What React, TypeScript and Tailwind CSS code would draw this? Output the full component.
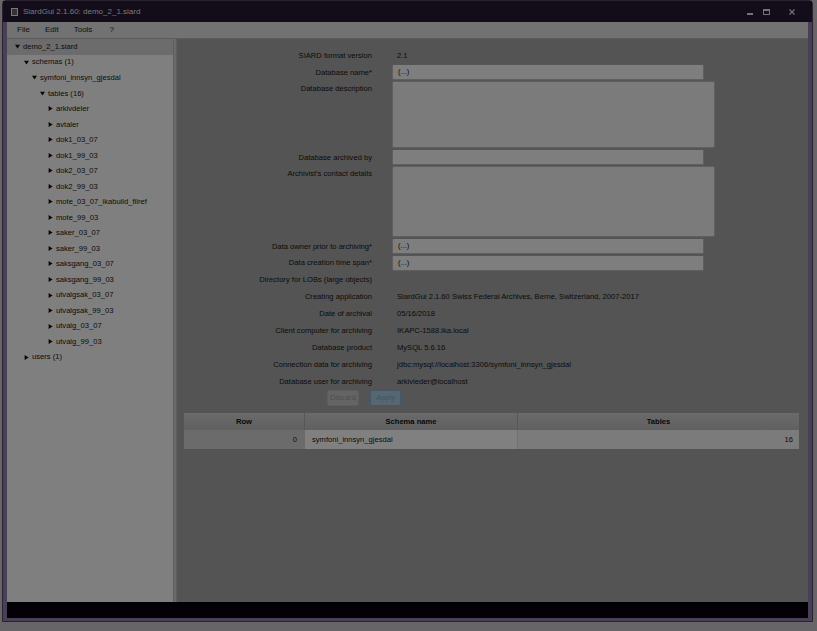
import React from 'react';

// SiardGui main window: tree of the archive on the left, metadata form and
// schema table on the right. The whole screenshot is dimmed, so colours are dark.

const font = { fontFamily: '"Liberation Sans", Arial, sans-serif' };

const tables = [
  'arkivdeler',
  'avtaler',
  'dok1_03_07',
  'dok1_99_03',
  'dok2_03_07',
  'dok2_99_03',
  'mote_03_07_ikabuild_filref',
  'mote_99_03',
  'saker_03_07',
  'saker_99_03',
  'saksgang_03_07',
  'saksgang_99_03',
  'utvalgsak_03_07',
  'utvalgsak_99_03',
  'utvalg_03_07',
  'utvalg_99_03',
];

const indent = ['pl-[8px]', 'pl-[17px]', 'pl-[25px]', 'pl-[33px]', 'pl-[41px]'];

function Arrow({ open }: { open: boolean }) {
  return (
    <svg width="5" height="5" viewBox="0 0 5 5" className="shrink-0">
      {open ? <polygon points="0,0.8 5,0.8 2.5,4.6" fill="#080808" /> : <polygon points="0.6,0 4.6,2.5 0.6,5" fill="#080808" />}
    </svg>
  );
}

function TreeRow({ level, open, label, selected }: { level: number; open: boolean; label: string; selected?: boolean }) {
  return (
    <div className={`flex h-[15.53px] items-center gap-[3px] ${indent[level]} ${selected ? 'bg-[#6c6c6c]' : ''}`}>
      <Arrow open={open} />
      <span className="text-[7.6px] leading-none text-[#0b0b0b]">{label}</span>
    </div>
  );
}

function Label({ children, top }: { children: React.ReactNode; top?: boolean }) {
  return (
    <div className={`flex justify-end text-[7.6px] leading-none text-[#0b0b0b] ${top ? 'items-start pt-[4px]' : 'items-center'}`}>
      {children}
    </div>
  );
}

function Input({ value, wide }: { value?: string; wide?: boolean }) {
  return (
    <div
      className={`flex h-[16px] items-center rounded-[2px] border border-[#5f5f5f] border-t-[#565656] bg-[#7e7e7e] pl-[5px] text-[7.6px] leading-none text-[#0b0b0b] ${wide ? 'w-[323px]' : 'w-[312px]'}`}
    >
      {value}
    </div>
  );
}

function Static({ children }: { children: React.ReactNode }) {
  return <div className="flex items-center pl-[5px] text-[7.6px] leading-none text-[#0b0b0b]">{children}</div>;
}

export default function App() {
  return (
    <div className="flex h-[631px] w-[817px] flex-col overflow-hidden bg-[#686569]" style={font}>
      <div className="ml-[2px] flex h-[622px] w-[811px] flex-col rounded-t-[4px] border border-[#2a2230] bg-[#4a4055] px-[4px] pb-[3px]">
        {/* title bar */}
        <div className="-mx-[4px] flex h-[21px] items-center bg-[#130d19] px-[8px]">
          <div className="h-[8px] w-[7px] border border-[#777] bg-[#333]" />
          <span className="ml-[5px] text-[8px] leading-none text-[#7c7982]">SiardGui 2.1.60: demo_2_1.siard</span>
          <div className="ml-auto flex items-center pr-[9px]">
            <div className="mt-[5px] h-[2px] w-[6px] bg-[#74717a]" />
            <div className="ml-[10px] h-[6px] w-[7px] border border-t-2 border-[#74717a]" />
            <svg width="6" height="6" viewBox="0 0 6 6" className="ml-[19px]">
              <path d="M0.5 0.5 L5.5 5.5 M5.5 0.5 L0.5 5.5" stroke="#74717a" strokeWidth="1.2" />
            </svg>
          </div>
        </div>

        <div className="flex flex-1 flex-col bg-[#545454]">
          {/* menu bar */}
          <div className="flex h-[17px] items-center gap-[15px] border-b border-[#5c5c5c] bg-[#727272] pl-[10px] text-[8px] leading-none text-[#0e0e0e]">
            <span>File</span>
            <span>Edit</span>
            <span>Tools</span>
            <span className="ml-[2px]">?</span>
          </div>

          <div className="flex flex-1">
            {/* tree */}
            <div className="w-[166px] bg-[#7f7f7f]">
              <TreeRow level={0} open label="demo_2_1.siard" selected />
              <TreeRow level={1} open label="schemas (1)" />
              <TreeRow level={2} open label="symfoni_innsyn_gjesdal" />
              <TreeRow level={3} open label="tables (16)" />
              {tables.map((t) => (
                <TreeRow key={t} level={4} open={false} label={t} />
              ))}
              <TreeRow level={1} open={false} label="users (1)" />
            </div>
            <div className="w-[4px] border-x border-[#5e5e5e] bg-[#6a6a6a]" />

            {/* metadata panel */}
            <div className="flex flex-1 flex-col pt-[8px]">
              <div className="grid grid-cols-[195px_1fr] gap-x-[20px]">
                <div className="flex h-[17px] justify-end"><Label>SIARD format version</Label></div>
                <Static>2.1</Static>
                <Label>Database name*</Label>
                <div className="flex h-[17px] items-start"><Input value="(...)" /></div>
                <Label top>Database description</Label>
                <div className="h-[68px]">
                  <div className="h-[67px] w-[323px] rounded-[2px] border border-[#5f5f5f] bg-[#7b7b7b]" />
                </div>
                <Label>Database archived by</Label>
                <div className="flex h-[17px] items-start"><Input /></div>
                <Label top>Archivist's contact details</Label>
                <div className="h-[72px]">
                  <div className="h-[71px] w-[323px] rounded-[2px] border border-[#5f5f5f] bg-[#7b7b7b]" />
                </div>
                <Label>Data owner prior to archiving*</Label>
                <div className="flex h-[17px] items-start"><Input value="(...)" /></div>
                <Label>Data creation time span*</Label>
                <div className="flex h-[16px] items-start"><Input value="(...)" /></div>
                {[
                  ['Directory for LOBs (large objects)', ''],
                  ['Creating application', 'SiardGui 2.1.60 Swiss Federal Archives, Berne, Switzerland, 2007-2017'],
                  ['Date of archival', '05/16/2018'],
                  ['Client computer for archiving', 'IKAPC-1588.ika.local'],
                  ['Database product', 'MySQL 5.6.16'],
                  ['Connection data for archiving', 'jdbc:mysql://localhost:3306/symfoni_innsyn_gjesdal'],
                  ['Database user for archiving', 'arkivleder@localhost'],
                ].map(([l, v]) => (
                  <React.Fragment key={l}>
                    <div className="flex h-[17px] justify-end"><Label>{l}</Label></div>
                    <Static>{v}</Static>
                  </React.Fragment>
                ))}
              </div>

              {/* buttons */}
              <div className="ml-[150px] flex h-[16px] gap-[11px]">
                <div className="flex w-[32px] items-center justify-center rounded-[2px] border border-[#5d5d5d] bg-[#646464] text-[7.6px] leading-none text-[#4e4e4e]">
                  Discard
                </div>
                <div className="flex w-[31px] items-center justify-center rounded-[2px] border border-[#43596a] bg-[#56676f] text-[7.6px] leading-none text-[#3e5665]">
                  Apply
                </div>
              </div>

              {/* schema table */}
              <div className="ml-[7px] mt-[7px] w-[615px]">
                <div className="grid h-[17px] grid-cols-[121px_213px_281px] bg-gradient-to-b from-[#6a6a6a] to-[#606060] text-[7.6px] font-bold leading-none text-[#080808]">
                  <div className="flex items-center justify-center border-r border-[#575757]">Row</div>
                  <div className="flex items-center justify-center border-r border-[#575757]">Schema name</div>
                  <div className="flex items-center justify-center">Tables</div>
                </div>
                <div className="grid h-[19px] grid-cols-[121px_213px_281px] text-[7.6px] leading-none text-[#0b0b0b]">
                  <div className="flex items-center justify-end bg-[#6b6b6b] pr-[8px]">0</div>
                  <div className="flex items-center border-r border-[#727272] bg-[#808080] pl-[7px]">symfoni_innsyn_gjesdal</div>
                  <div className="flex items-center justify-end bg-[#7b7b7b] pr-[6px]">16</div>
                </div>
              </div>
            </div>
          </div>

          {/* bottom bar */}
          <div className="h-[16px] bg-[#030105]" />
        </div>
      </div>
    </div>
  );
}
